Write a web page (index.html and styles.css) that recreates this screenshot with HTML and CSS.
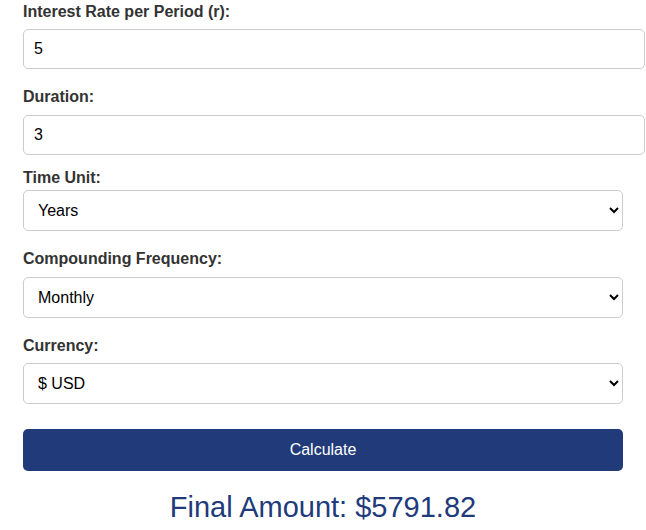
FILE: index.html
```html
<!DOCTYPE html>
<html>
<head>
<meta charset="utf-8">
<link rel="stylesheet" href="styles.css">
</head>
<body>
<div class="calc">
  <div class="group g1">
    <label class="lbl">Interest Rate per Period (r):</label>
    <input class="field" type="text" value="5">
  </div>
  <div class="group g2">
    <label class="lbl">Duration:</label>
    <input class="field" type="text" value="3">
  </div>
  <div class="group g3">
    <label class="lbl">Time Unit:</label>
    <select class="pick"><option>Years</option></select>
  </div>
  <div class="group g4">
    <label class="lbl">Compounding Frequency:</label>
    <select class="pick"><option>Monthly</option></select>
  </div>
  <div class="group g5">
    <label class="lbl">Currency:</label>
    <select class="pick"><option>$ USD</option></select>
  </div>
  <button class="btn">Calculate</button>
  <div class="result">Final Amount: $5791.82</div>
</div>
</body>
</html>
```
FILE: styles.css
```css
html, body {
  margin: 0;
  padding: 0;
  background: #ffffff;
}
body {
  font-family: "Liberation Sans", Arial, sans-serif;
  color: #333333;
}
.calc {
  width: 600px;
  padding: 3px 23px 0 23px;
}
.group {
  display: flex;
  flex-direction: column;
  align-items: flex-start;
}
.g1 { margin-bottom: 19px; }
.g2 { margin-bottom: 14px; }
.g3 { margin-bottom: 19px; }
.g4 { margin-bottom: 19px; }
.g5 { margin-bottom: 25px; }
.lbl {
  display: block;
  font-weight: bold;
  font-size: 16px;
  line-height: 18px;
  color: #333333;
  margin-bottom: 8px;
}
.g2 .lbl { margin-bottom: 9px; }
.g3 .lbl { margin-bottom: 3px; }
.g4 .lbl { margin-bottom: 9px; }
.g5 .lbl { margin-bottom: 8px; }
.field {
  box-sizing: border-box;
  width: 622px;
  height: 40px;
  margin: 0;
  padding: 0 10px;
  border: 1px solid #cccccc;
  border-radius: 5px;
  font-family: "Liberation Sans", Arial, sans-serif;
  font-size: 16px;
  color: #000000;
  background: #ffffff;
  outline: none;
}
.pick {
  box-sizing: border-box;
  width: 600px;
  height: 41px;
  margin: 0;
  padding: 0 10px;
  border: 1px solid #cccccc;
  border-radius: 5px;
  font-family: "Liberation Sans", Arial, sans-serif;
  font-size: 16px;
  color: #000000;
  background-color: #ffffff;
}
.btn {
  display: block;
  box-sizing: border-box;
  width: 600px;
  height: 42px;
  margin: 0;
  border: none;
  border-radius: 5px;
  background: #213a7a;
  color: #ffffff;
  font-family: "Liberation Sans", Arial, sans-serif;
  font-size: 16px;
}
.result {
  margin-top: 20px;
  text-align: center;
  font-size: 29px;
  color: #213a7a;
}
```
